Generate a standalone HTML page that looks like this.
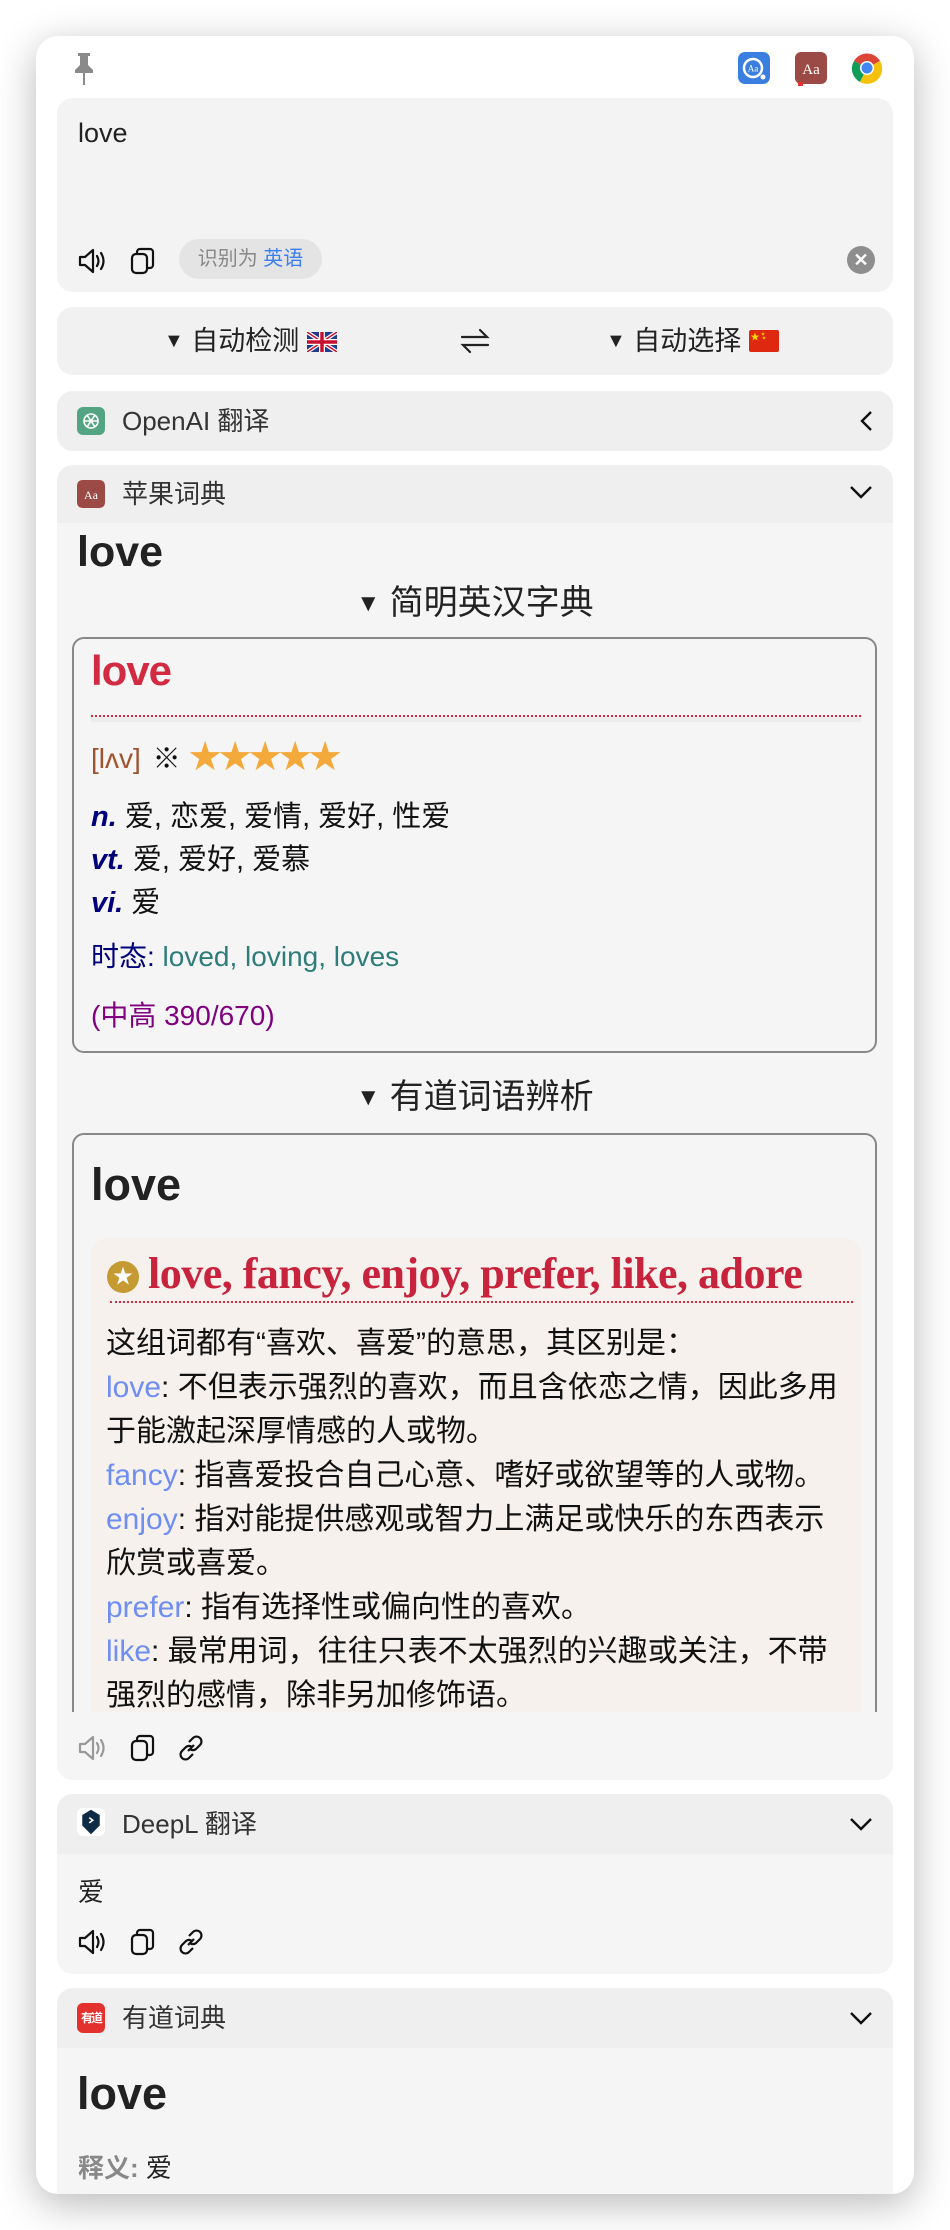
<!DOCTYPE html>
<html><head><meta charset="utf-8">
<style>
*{margin:0;padding:0;box-sizing:border-box}
body{width:950px;height:2230px;background:#fff;font-family:"Liberation Sans","Noto Sans CJK SC",sans-serif;color:#222;position:relative;overflow:hidden}
.win{position:absolute;left:36px;top:36px;width:878px;height:2158px;background:#fff;border-radius:22px;box-shadow:0 10px 40px rgba(0,0,0,.28);overflow:hidden}
.abs{position:absolute}
.box{position:absolute;left:21px;width:836px;background:#f4f4f4;border-radius:16px;overflow:hidden}
.hdr{position:absolute;left:0;top:0;width:100%;height:58px;background:#efefef}
.hdr .t{position:absolute;left:65px;top:0;line-height:58px;font-size:26px;color:#333}
.hdr .ic{position:absolute;left:20px;top:15px;width:28px;height:28px;border-radius:6px}
.chev{position:absolute;right:20px;top:19px}
</style></head><body>
<div class="win">
  <svg class="abs" style="left:36px;top:16px" width="24" height="34" viewBox="0 0 24 34"><path d="M6 1h12v3h-2v9l5 5v3H3v-3l5-5V4H6z" fill="#8a8a8a"/><path d="M12 21v12" stroke="#8a8a8a" stroke-width="2"/></svg>
  <svg class="abs" style="left:702px;top:16px" width="32" height="32" viewBox="0 0 32 32"><rect width="32" height="32" rx="7" fill="#3a7fe0"/><circle cx="15" cy="16" r="9" fill="none" stroke="#fff" stroke-width="2.5"/><text x="15" y="19.5" font-size="9" fill="#fff" text-anchor="middle" font-family="Liberation Serif">Aa</text><circle cx="25" cy="25" r="2.5" fill="#fff"/></svg>
  <svg class="abs" style="left:759px;top:16px" width="32" height="34" viewBox="0 0 32 34"><rect width="32" height="32" rx="6" fill="#9b4a45"/><text x="16" y="22" font-size="15" fill="#fff" text-anchor="middle" font-family="Liberation Serif">Aa</text><rect x="3" y="30" width="5" height="4" fill="#d33"/></svg>
  <svg class="abs" style="left:815px;top:16px" width="32" height="32" viewBox="0 0 32 32"><rect width="32" height="32" rx="7" fill="#fff"/><path d="M3 9A15 15 0 0 1 29 9L16 16z" fill="#db4437"/><path d="M3 9L16 16 9 30A15 15 0 0 1 3 9z" fill="#0f9d58"/><path d="M29 9A15 15 0 0 1 9 30L16 16z" fill="#f4c20d"/><circle cx="16" cy="16" r="7" fill="#fff"/><circle cx="16" cy="16" r="5.5" fill="#4285f4"/></svg>

  <div class="box" style="top:62px;height:194px;background:#f3f3f3">
    <div class="abs" style="left:21px;top:20px;font-size:27px;color:#222">love</div>
    <svg class="abs" style="left:21px;top:149px" width="30" height="28" viewBox="0 0 30 28"><path d="M2 10h5l8-7v22l-8-7H2z" fill="none" stroke="#111" stroke-width="2.2" stroke-linejoin="round"/><path d="M19 9q3 5 0 10M23 6q5 8 0 16" fill="none" stroke="#111" stroke-width="2.2" stroke-linecap="round"/></svg>
    <svg class="abs" style="left:73px;top:149px" width="26" height="28" viewBox="0 0 26 28"><rect x="2" y="7" width="15" height="19" rx="4" fill="none" stroke="#111" stroke-width="2.2"/><path d="M7 6V5a3 3 0 0 1 3-3h10a3 3 0 0 1 3 3v13a3 3 0 0 1-3 3h-3" fill="none" stroke="#111" stroke-width="2.2"/></svg>
    <div class="abs" style="left:122px;top:141px;width:143px;height:40px;border-radius:20px;background:#e4e4e4;font-size:20px;line-height:40px;text-align:center;color:#888">识别为 <span style="color:#3a7ef0">英语</span></div>
    <div class="abs" style="left:790px;top:148px;width:28px;height:28px;border-radius:14px;background:#8e8e8e;color:#fff;font-size:18px;line-height:28px;text-align:center;font-weight:bold">✕</div>
  </div>

  <div class="box" style="top:271px;height:68px;background:#f1f1f1">
    <div class="abs" style="left:107px;top:0;line-height:68px;font-size:27px;color:#222"><span style="font-size:20px;vertical-align:3px">▼</span> 自动检测 <svg width="30" height="20" viewBox="0 0 30 20" style="vertical-align:-2px"><rect width="30" height="20" fill="#1f3a8a"/><path d="M0 0L30 20M30 0L0 20" stroke="#fff" stroke-width="4"/><path d="M0 0L30 20M30 0L0 20" stroke="#c8102e" stroke-width="1.5"/><path d="M15 0v20M0 10h30" stroke="#fff" stroke-width="6"/><path d="M15 0v20M0 10h30" stroke="#c8102e" stroke-width="3.5"/></svg></div>
    <svg class="abs" style="left:403px;top:18px" width="30" height="32" viewBox="0 0 30 32"><g fill="none" stroke="#222" stroke-width="2.2" stroke-linecap="round"><path d="M2 12h25l-7-7"/><path d="M28 20H3l7 7"/></g></svg>
    <div class="abs" style="left:549px;top:0;line-height:68px;font-size:27px;color:#222"><span style="font-size:20px;vertical-align:3px">▼</span> 自动选择 <svg width="30" height="22" viewBox="0 0 30 22" style="vertical-align:-2px"><rect width="30" height="22" rx="2" fill="#de2910"/><text x="6" y="10" font-size="9" fill="#ffde00" text-anchor="middle">★</text><text x="12" y="5" font-size="4" fill="#ffde00">★</text><text x="13" y="9" font-size="4" fill="#ffde00">★</text></svg></div>
  </div>

  <div class="box" style="top:355px;height:60px;background:#efefef">
    <div class="hdr" style="height:60px"><svg class="ic" style="top:16px;background:#53a483" viewBox="0 0 28 28"><g fill="none" stroke="#fff" stroke-width="1.6"><circle cx="14" cy="14" r="7"/><path d="M10 8l8 12M18 8l-8 12M7 14h14"/></g></svg><div class="t" style="line-height:60px">OpenAI 翻译</div>
    <svg class="chev" style="top:19px" width="14" height="22" viewBox="0 0 14 22"><path d="M12 2L3 11l9 9" fill="none" stroke="#111" stroke-width="2.4"/></svg></div>
  </div>

  <div class="box" style="top:429px;height:1315px;background:#f5f5f5">
    <div class="hdr"><svg class="ic" viewBox="0 0 28 28" style="border-radius:5px"><rect width="28" height="28" rx="5" fill="#9b4a45"/><text x="14" y="19" font-size="12" fill="#fff" text-anchor="middle" font-family="Liberation Serif">Aa</text></svg><div class="t">苹果词典</div>
    <svg class="chev" width="24" height="16" viewBox="0 0 24 16"><path d="M2 3l10 10L22 3" fill="none" stroke="#111" stroke-width="2.4"/></svg></div>
    <div class="abs" style="left:20px;top:63px;font-size:43px;font-weight:bold;color:#222">love</div>
    <div class="abs" style="left:0;width:100%;top:118px;text-align:center;font-size:34px;color:#222;line-height:40px"><span style="font-size:24px;vertical-align:3px">▼</span> 简明英汉字典</div>
    <div class="abs" style="left:15px;top:172px;width:805px;height:416px;border:2px solid #888;border-radius:12px">
      <div class="abs" style="left:17px;top:8px;font-size:42px;font-weight:bold;color:#d12a41;letter-spacing:-1px">love</div>
      <div class="abs" style="left:17px;top:76px;width:770px;border-top:2px dotted #d12a41"></div>
      <div class="abs" style="left:17px;top:78px;width:770px;height:5px;background:#ececec"></div>
      <div class="abs" style="left:17px;top:98px;font-size:28px;color:#a0522d;line-height:40px">[lʌv] <span style="color:#111;font-size:28px;font-weight:bold;margin:0 8px 0 4px">※</span><span style="color:#f4a93b;font-size:33px;letter-spacing:-3px">★★★★★</span></div>
      <div class="abs" style="left:17px;top:157px;font-size:29px;line-height:43px;color:#111"><b style="color:#00007a;font-style:italic">n.</b> 爱, 恋爱, 爱情, 爱好, 性爱<br><b style="color:#00007a;font-style:italic">vt.</b> 爱, 爱好, 爱慕<br><b style="color:#00007a;font-style:italic">vi.</b> 爱</div>
      <div class="abs" style="left:17px;top:298px;font-size:28px;line-height:40px;color:#2e7d7a"><span style="color:#00007a">时态:</span> loved, loving, loves</div>
      <div class="abs" style="left:17px;top:357px;font-size:28px;line-height:40px;color:#800080">(中高 390/670)</div>
    </div>
    <div class="abs" style="left:0;width:100%;top:612px;text-align:center;font-size:34px;color:#222;line-height:40px"><span style="font-size:24px;vertical-align:3px">▼</span> 有道词语辨析</div>
    <div class="abs" style="left:15px;top:668px;width:805px;height:700px;border:2px solid #888;border-radius:12px;overflow:hidden">
      <div class="abs" style="left:17px;top:24px;font-size:45px;font-weight:bold;color:#222">love</div>
      <div class="abs" style="left:17px;top:103px;width:770px;height:700px;background:#f6f1ed;border-radius:16px">
        <div class="abs" style="left:16px;top:23px;width:32px;height:32px;border-radius:16px;background:#c59a33;color:#fff;text-align:center;font-size:20px;line-height:32px">★</div>
        <div class="abs" style="left:57px;top:10px;font-family:'Liberation Serif',serif;font-weight:bold;font-size:44px;color:#c8233c;letter-spacing:-0.5px;white-space:nowrap">love, fancy, enjoy, prefer, like, adore</div>
        <div class="abs" style="left:19px;top:63px;width:743px;border-top:2px dotted #d12a41"></div>
        <div class="abs" style="left:15px;top:84px;font-size:30px;line-height:44px;color:#111;white-space:nowrap">这组词都有“喜欢、喜爱”的意思，其区别是：<br><span style="color:#6f8ef2">love</span>: 不但表示强烈的喜欢，而且含依恋之情，因此多用<br>于能激起深厚情感的人或物。<br><span style="color:#6f8ef2">fancy</span>: 指喜爱投合自己心意、嗜好或欲望等的人或物。<br><span style="color:#6f8ef2">enjoy</span>: 指对能提供感观或智力上满足或快乐的东西表示<br>欣赏或喜爱。<br><span style="color:#6f8ef2">prefer</span>: 指有选择性或偏向性的喜欢。<br><span style="color:#6f8ef2">like</span>: 最常用词，往往只表不太强烈的兴趣或关注，不带<br>强烈的感情，除非另加修饰语。</div>
      </div>
    </div>
    <div class="abs" style="left:0;top:1247px;width:100%;height:68px;background:#f5f5f5"></div>
    <svg class="abs" style="left:21px;top:1269px" width="30" height="28" viewBox="0 0 30 28"><path d="M2 10h5l8-7v22l-8-7H2z" fill="none" stroke="#999" stroke-width="2.2" stroke-linejoin="round"/><path d="M19 9q3 5 0 10M23 6q5 8 0 16" fill="none" stroke="#999" stroke-width="2.2" stroke-linecap="round"/></svg>
    <svg class="abs" style="left:73px;top:1269px" width="26" height="28" viewBox="0 0 26 28"><rect x="2" y="7" width="15" height="19" rx="4" fill="none" stroke="#111" stroke-width="2.2"/><path d="M7 6V5a3 3 0 0 1 3-3h10a3 3 0 0 1 3 3v13a3 3 0 0 1-3 3h-3" fill="none" stroke="#111" stroke-width="2.2"/></svg>
    <svg class="abs" style="left:120px;top:1269px" width="28" height="28" viewBox="0 0 28 28"><g fill="none" stroke="#111" stroke-width="2.2"><path d="M12 8l4-4a4.5 4.5 0 0 1 7 7l-4 4a4.5 4.5 0 0 1-6 0"/><path d="M16 20l-4 4a4.5 4.5 0 0 1-7-7l4-4a4.5 4.5 0 0 1 6 0"/><path d="M11 17l6-6"/></g></svg>
  </div>

  <div class="box" style="top:1758px;height:180px;background:#f5f5f5">
    <div class="hdr" style="height:60px"><svg class="ic" style="top:14px;background:#fff" viewBox="0 0 28 32" width="28" height="32"><path d="M14 2l10 6v12l-10 10z M14 2L4 8v12l10 10" fill="#0f2b46"/><path d="M12 11l4 3-4 3" fill="none" stroke="#fff" stroke-width="1.8"/></svg><div class="t" style="line-height:60px">DeepL 翻译</div>
    <svg class="chev" style="top:22px" width="24" height="16" viewBox="0 0 24 16"><path d="M2 3l10 10L22 3" fill="none" stroke="#111" stroke-width="2.4"/></svg></div>
    <div class="abs" style="left:21px;top:78px;font-size:26px;color:#222">爱</div>
    <svg class="abs" style="left:21px;top:134px" width="30" height="28" viewBox="0 0 30 28"><path d="M2 10h5l8-7v22l-8-7H2z" fill="none" stroke="#111" stroke-width="2.2" stroke-linejoin="round"/><path d="M19 9q3 5 0 10M23 6q5 8 0 16" fill="none" stroke="#111" stroke-width="2.2" stroke-linecap="round"/></svg>
    <svg class="abs" style="left:73px;top:134px" width="26" height="28" viewBox="0 0 26 28"><rect x="2" y="7" width="15" height="19" rx="4" fill="none" stroke="#111" stroke-width="2.2"/><path d="M7 6V5a3 3 0 0 1 3-3h10a3 3 0 0 1 3 3v13a3 3 0 0 1-3 3h-3" fill="none" stroke="#111" stroke-width="2.2"/></svg>
    <svg class="abs" style="left:120px;top:134px" width="28" height="28" viewBox="0 0 28 28"><g fill="none" stroke="#111" stroke-width="2.2"><path d="M12 8l4-4a4.5 4.5 0 0 1 7 7l-4 4a4.5 4.5 0 0 1-6 0"/><path d="M16 20l-4 4a4.5 4.5 0 0 1-7-7l4-4a4.5 4.5 0 0 1 6 0"/><path d="M11 17l6-6"/></g></svg>
  </div>

  <div class="box" style="top:1952px;height:260px;background:#f5f5f5">
    <div class="hdr" style="height:60px"><div class="ic" style="top:15px;height:30px;background:#e3322d;color:#fff;font-size:12px;line-height:30px;text-align:center;font-weight:bold;letter-spacing:-2px">有道</div><div class="t" style="line-height:60px">有道词典</div>
    <svg class="chev" style="top:22px" width="24" height="16" viewBox="0 0 24 16"><path d="M2 3l10 10L22 3" fill="none" stroke="#111" stroke-width="2.4"/></svg></div>
    <div class="abs" style="left:20px;top:80px;font-size:45px;font-weight:bold;color:#222">love</div>
    <div class="abs" style="left:21px;top:160px;font-size:26px;color:#222"><b style="color:#888">释义:</b> 爱</div>
  </div>
</div>
</body></html>
